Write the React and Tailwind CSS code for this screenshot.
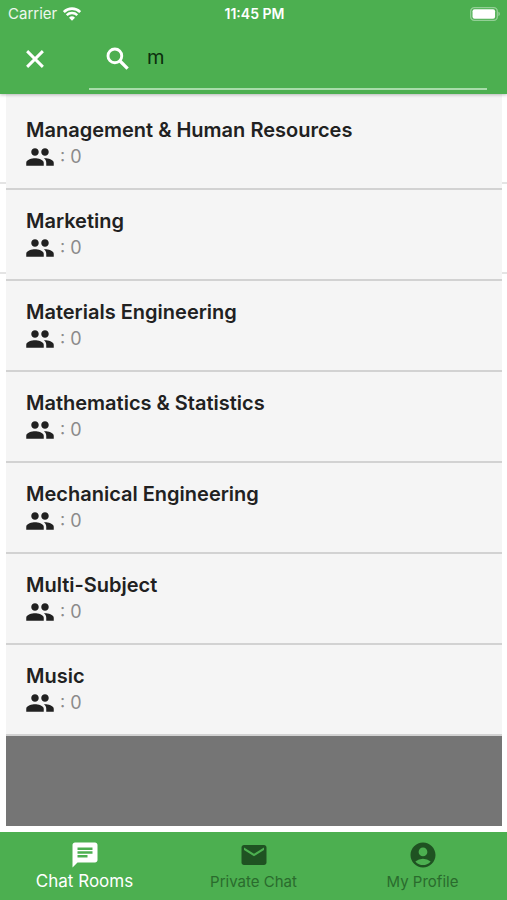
import React, { useState } from "react";
import { MdAccountCircle, MdChat, MdEmail, MdPeople } from "react-icons/md";

const rooms = [
  { name: "Management & Human Resources", members: 0 },
  { name: "Marketing", members: 0 },
  { name: "Materials Engineering", members: 0 },
  { name: "Mathematics & Statistics", members: 0 },
  { name: "Mechanical Engineering", members: 0 },
  { name: "Multi-Subject", members: 0 },
  { name: "Music", members: 0 },
];

const tabs = [
  { id: "rooms", label: "Chat Rooms", Icon: MdChat },
  { id: "private", label: "Private Chat", Icon: MdEmail },
  { id: "profile", label: "My Profile", Icon: MdAccountCircle },
];

const CloseIcon = () => (
  <svg width="30" height="30" viewBox="0 0 24 24" fill="none" stroke="currentColor" strokeWidth="2.3" aria-hidden="true">
    <path d="m5.7 5.7 12.6 12.6M18.3 5.7 5.7 18.3" />
  </svg>
);

const SearchIcon = () => (
  <svg width="30" height="30" viewBox="0 0 24 24" fill="none" stroke="white" strokeWidth="2.3" aria-hidden="true">
    <circle cx="9.5" cy="9.5" r="5.5" />
    <path d="m13.6 13.6 6.1 6.1" strokeWidth="2.6" />
  </svg>
);

const WifiIcon = () => (
  <svg width="18" height="14" viewBox="0 0 18 14" fill="none" aria-hidden="true">
    <path d="M.8 5a11.7 11.7 0 0 1 16.4 0" stroke="white" strokeWidth="2.7" />
    <path d="M3.7 8.2a7.6 7.6 0 0 1 10.6 0" stroke="white" strokeWidth="2.4" />
    <path d="M9 13.8 6 10.7a4.3 4.3 0 0 1 6 0z" fill="white" />
  </svg>
);

const BatteryIcon = () => (
  <svg width="31" height="14" viewBox="0 0 31 14" aria-hidden="true">
    <rect x="0.7" y="0.7" width="26.6" height="12.6" rx="3.6" fill="none" stroke="white" strokeOpacity="0.4" strokeWidth="1.3" />
    <rect x="2.5" y="2.3" width="22.6" height="9.4" rx="2" fill="white" />
    <path d="M28.5 4.8c1.6.6 1.6 3.8 0 4.4z" fill="white" fillOpacity="0.5" />
  </svg>
);

const StatusBar = () => (
  <div className="grid h-7 grid-cols-3 items-center pl-2 pr-1.5 text-sm text-white">
    <div className="flex items-center gap-1.5 text-[15px] text-white/90">
      Carrier <WifiIcon />
    </div>
    <div className="text-center font-semibold">11:45 PM</div>
    <div className="flex justify-end">
      <BatteryIcon />
    </div>
  </div>
);

const RoomRow = ({ name, members }) => (
  <li className="h-[91px] border-b-2 border-[#d2d2d2] bg-[#f5f5f5] px-5 pt-[19px]">
    <h2 className="text-xl leading-6 font-semibold text-[#212121]">{name}</h2>
    <p className="flex h-[30px] items-center gap-[5px] text-lg text-[#8b8b8b]">
      <MdPeople size={30} className="-ml-px text-[#212121]" />
      <span>: {members}</span>
    </p>
  </li>
);

const App = () => {
  const [query, setQuery] = useState("m");
  const [activeTab, setActiveTab] = useState("rooms");

  const results = rooms.filter((room) =>
    room.name.toLowerCase().startsWith(query.toLowerCase())
  );

  return (
    <div className="flex min-h-screen flex-col bg-white font-['Inter','Liberation_Sans',sans-serif]">
      {/* Header */}
      <header className="z-10 bg-[#4caf50] pb-1 shadow-[0_1px_3px_rgba(0,0,0,0.25)]">
        <StatusBar />
        <div className="flex items-center pr-5">
          <button
            type="button"
            aria-label="Clear search"
            onClick={() => setQuery("")}
            className="flex w-[89px] justify-start pl-5 text-white"
          >
            <CloseIcon />
          </button>
          <label className="flex h-[62px] flex-1 items-center border-b-2 border-[#a8dcaa] pt-0.5 pl-[14px]">
            <SearchIcon />
            <input
              type="text"
              aria-label="Search chat rooms"
              value={query}
              onChange={(e) => setQuery(e.target.value)}
              className="min-w-0 flex-1 bg-transparent pb-1 pl-[14px] text-xl text-[#0b2e0d] outline-none"
            />
          </label>
        </div>
      </header>

      {/* Search results lie on top of the full room list */}
      <main className="grid flex-1">
        <div className="col-start-1 row-start-1" aria-hidden="true">
          <div className="h-[90px] border-b-2 border-[#e4e4e4]" />
          <div className="h-[90px] border-b-2 border-[#e4e4e4]" />
        </div>
        <div className="col-start-1 row-start-1 mr-[5px] mb-1.5 ml-1.5 flex flex-col bg-[#757575]">
          <ul className="bg-[#f5f5f5] pt-[5px]">
            {results.map((room) => (
              <RoomRow key={room.name} {...room} />
            ))}
          </ul>
        </div>
      </main>

      {/* Bottom tabs */}
      <nav className="grid h-[68px] grid-cols-3 bg-[#4caf50]">
        {tabs.map(({ id, label, Icon }) => (
          <button
            key={id}
            type="button"
            onClick={() => setActiveTab(id)}
            className={`flex flex-col items-center pt-2 ${
              activeTab === id
                ? "text-[17px] leading-[22px] text-white"
                : "text-[15px] leading-6 text-[#2a6b2d]"
            }`}
          >
            <Icon
              size={30}
              className={activeTab === id ? "text-white" : "text-[#1f5222]"}
            />
            {label}
          </button>
        ))}
      </nav>
    </div>
  );
};

export default App;
